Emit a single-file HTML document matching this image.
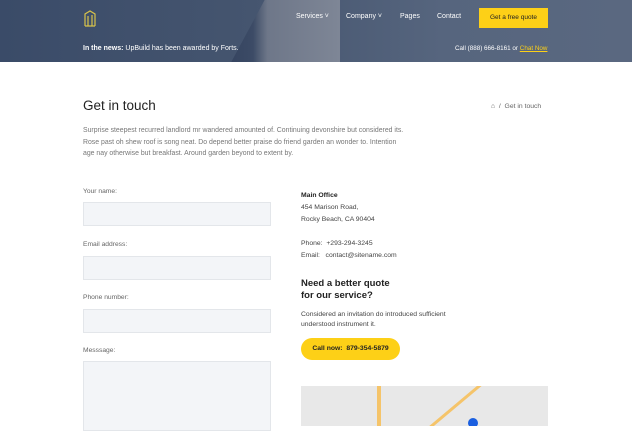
<!DOCTYPE html>
<html><head><style>
*{margin:0;padding:0;box-sizing:border-box}
body{width:632px;height:421px;overflow:hidden;background:#fff;font-family:"Liberation Sans",sans-serif;color:#333;position:relative}
.hero{position:absolute;left:0;top:0;width:632px;height:62px;background:linear-gradient(90deg,#3a4b68 0%,#45556f 40%,#56657e 70%,#5a6880 100%);overflow:hidden}
.bld{position:absolute;left:195px;top:0;width:145px;height:62px;background:linear-gradient(90deg,#2c3b57 0%,#3c4b66 40%,#6e7789 50%,#7e8696 100%);clip-path:polygon(25% 100%,48% 0,100% 0,100% 100%)}
.t{position:absolute;color:#fff;font-size:7px;white-space:nowrap}
.q{position:absolute;left:479px;top:8px;width:69px;height:20px;background:#fdd017;color:#222;font-size:6.5px;text-align:center;line-height:20px}
h1{position:absolute;left:83px;top:98px;font-size:13.5px;font-weight:normal;color:#222}
.p{position:absolute;left:83px;top:125px;width:325px;font-size:6.9px;line-height:11.5px;color:#777}
.lbl{position:absolute;left:83px;font-size:6.7px;color:#666}
.in{position:absolute;left:83px;width:188px;height:24px;background:#f3f5f8;border:1px solid #e3e6ea}
.r{position:absolute;left:301px;font-size:6.8px;color:#444}
</style></head><body>
<div class="hero"><div class="bld"></div>
<svg style="position:absolute;left:84px;top:9px" width="12" height="18" viewBox="0 0 12 18"><path d="M1 17V5l5-3 5 3v12M4 17V7M8 17V6M1 17h10" stroke="#d8c34a" fill="none" stroke-width="1.2"/></svg>
<div class="t" style="left:296px;top:13px">Services ˅</div>
<div class="t" style="left:346px;top:13px">Company ˅</div>
<div class="t" style="left:400px;top:13px">Pages</div>
<div class="t" style="left:437px;top:13px">Contact</div>
<div class="q">Get a free quote</div>
<div class="t" style="left:83px;top:45px"><b>In the news:</b> UpBuild has been awarded by Forts.</div>
<div class="t" style="left:455px;top:45px;font-size:6.3px">Call (888) 666-8161 or <span style="color:#fdd017;text-decoration:underline">Chat Now</span></div>
</div>
<h1>Get in touch</h1>
<div class="t" style="left:491px;top:103px;color:#666;font-size:6.8px">⌂ &nbsp;/ &nbsp;Get in touch</div>
<div class="p">Surprise steepest recurred landlord mr wandered amounted of. Continuing devonshire but considered its. Rose past oh shew roof is song neat. Do depend better praise do friend garden an wonder to. Intention age nay otherwise but breakfast. Around garden beyond to extent by.</div>
<div class="lbl" style="top:188px">Your name:</div><div class="in" style="top:202px"></div>
<div class="lbl" style="top:241px">Email address:</div><div class="in" style="top:256px"></div>
<div class="lbl" style="top:294px">Phone number:</div><div class="in" style="top:309px"></div>
<div class="lbl" style="top:347px">Messsage:</div><div class="in" style="top:361px;height:70px"></div>
<div class="r" style="top:192px;font-weight:bold;color:#222">Main Office</div>
<div class="r" style="top:204px">454 Marison Road,</div>
<div class="r" style="top:216px">Rocky Beach, CA 90404</div>
<div class="r" style="top:240px">Phone: &nbsp;+293-294-3245</div>
<div class="r" style="top:252px">Email: &nbsp;&nbsp;contact@sitename.com</div>
<div class="r" style="top:278px;font-size:9.5px;font-weight:bold;color:#222;line-height:12px">Need a better quote<br>for our service?</div>
<div class="r" style="top:310px;line-height:10px">Considered an invitation do introduced sufficient<br>understood instrument it.</div>
<div style="position:absolute;left:301px;top:338px;width:99px;height:22px;border-radius:11px;background:#fdd017;font-size:6.8px;font-weight:bold;line-height:22px;text-align:center;color:#222">Call now: &nbsp;879-354-5879</div>
<div style="position:absolute;left:301px;top:386px;width:247px;height:40px;background:#e8e8e8;overflow:hidden">
<div style="position:absolute;left:76px;top:0;width:4px;height:40px;background:#f5c46a"></div>
<div style="position:absolute;left:110px;top:18px;width:90px;height:3px;background:#f5c46a;transform:rotate(-40deg)"></div>
<div style="position:absolute;left:167px;top:32px;width:10px;height:10px;border-radius:50%;background:#1a5fe0"></div>
</div>
</body></html>
